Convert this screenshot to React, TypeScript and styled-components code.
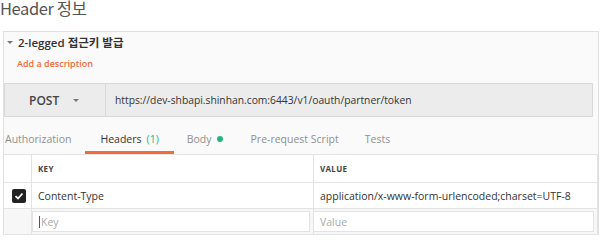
import styled, { createGlobalStyle } from 'styled-components';

const GlobalStyle = createGlobalStyle`
  body {
    margin: 0;
    background: #fff;
    font-family: "Open Sans", "Noto Sans CJK KR", sans-serif;
  }
`;

const Page = styled.div`
  width: 600px;
  height: 241px;
  overflow: hidden;
`;

const Title = styled.h2`
  margin: 0;
  height: 31px;
  font-family: "Noto Sans CJK KR", sans-serif;
  font-size: 16.5px;
  font-weight: 400;
  line-height: 17px;
  color: #555;
  letter-spacing: -0.4px;
`;

const Panel = styled.div`
  margin-left: 3px;
  width: 594px;
  background: #fafafa;
  border: 1px solid #e0e0e0;
  border-bottom: none;
`;

const NameRow = styled.div`
  display: flex;
  align-items: center;
  gap: 5px;
  height: 20px;
  padding: 0 0 0 3px;
  font-family: "Open Sans", "Noto Sans CJK KR", sans-serif;
  font-size: 11.5px;
  font-weight: 600;
  color: #333;
`;

const Caret = styled.span<{ $size: number }>`
  width: 0;
  height: 0;
  border-left: ${(p) => p.$size}px solid transparent;
  border-right: ${(p) => p.$size}px solid transparent;
  border-top: ${(p) => p.$size}px solid #777;
`;

const Description = styled.div`
  height: 22px;
  margin-bottom: 9px;
  padding-left: 13px;
  display: flex;
  align-items: center;
  font-size: 9px;
  font-weight: 600;
  color: #f26b3a;
`;

const UrlBar = styled.div`
  display: flex;
  height: 34px;
  width: 589px;
  border: 1px solid #d9d9d9;
  background: #ececec;
  box-sizing: border-box;
`;

const MethodBox = styled.div`
  width: 101px;
  display: flex;
  align-items: center;
  gap: 14px;
  padding-left: 24px;
  box-sizing: border-box;
  border-right: 1px solid #d9d9d9;
  font-size: 12px;
  font-weight: 600;
  color: #444;
`;

const UrlText = styled.div`
  display: flex;
  align-items: center;
  padding-left: 9px;
  font-size: 10.3px;
  color: #333;
`;

const Tabs = styled.div`
  display: flex;
  height: 36px;
  margin-top: 1px;
  align-items: stretch;
`;

const Tab = styled.div<{ $active?: boolean; $gap: number }>`
  display: flex;
  align-items: center;
  gap: 5px;
  padding: 8px ${(p) => (p.$active ? 15 : 0)}px 0;
  margin-right: ${(p) => p.$gap}px;
  font-size: 10.5px;
  color: ${(p) => (p.$active ? '#333' : '#909090')};
  border-bottom: 3px solid ${(p) => (p.$active ? '#f26b3a' : 'transparent')};
  box-sizing: border-box;
  &:first-child {
    padding-left: 1px;
  }
`;

const Count = styled.span`
  color: #26b47f;
`;

const Dot = styled.span`
  width: 6px;
  height: 6px;
  border-radius: 50%;
  background: #26b47f;
`;

const Table = styled.div`
  display: grid;
  grid-template-columns: 28px 282px 284px;
  background: #fff;
  border-top: 1px solid #e3e3e3;
`;

const Cell = styled.div<{ $h: number; $last?: boolean }>`
  height: ${(p) => p.$h}px;
  display: flex;
  align-items: center;
  padding-left: 6px;
  box-sizing: border-box;
  border-right: 1px solid #e3e3e3;
  border-bottom: 1px solid #e3e3e3;
  font-size: 10.5px;
  color: #333;
  background: ${(p) => (p.$last ? '#f7f7f7' : '#fff')};
`;

const HeadCell = styled(Cell)`
  font-size: 8px;
  font-weight: 700;
  letter-spacing: 0.3px;
  color: #444;
`;

const CheckCell = styled(Cell)`
  padding-left: 8px;
`;

const Check = styled.span`
  width: 14px;
  height: 14px;
  border-radius: 2px;
  background: #222;
  display: flex;
  align-items: center;
  justify-content: center;
`;

const InputCell = styled(Cell)`
  padding: 2px 3px 2px 0;
`;

const FakeInput = styled.div<{ $cursor?: boolean }>`
  flex: 1;
  height: 100%;
  background: #fff;
  border: 1px solid #e3e3e3;
  box-sizing: border-box;
  display: flex;
  align-items: center;
  padding-left: 6px;
  color: #aaa;
  font-size: 10.5px;
  border-left: ${(p) => (p.$cursor ? '1px solid #e3e3e3' : 'none')};
`;

const Cursor = styled.span`
  width: 1px;
  height: 12px;
  background: #555;
  margin-right: 1px;
`;

export default function App() {
  return (
    <Page>
      <GlobalStyle />
      <Title>Header 정보</Title>
      <Panel>
        <NameRow>
          <Caret $size={3} />
          2-legged 접근키 발급
        </NameRow>
        <Description>Add a description</Description>
        <UrlBar>
          <MethodBox>
            POST
            <Caret $size={3} />
          </MethodBox>
          <UrlText>https://dev-shbapi.shinhan.com:6443/v1/oauth/partner/token</UrlText>
        </UrlBar>
        <Tabs>
          <Tab $gap={14}>Authorization</Tab>
          <Tab $active $gap={13}>
            Headers <Count>(1)</Count>
          </Tab>
          <Tab $gap={28}>
            Body <Dot />
          </Tab>
          <Tab $gap={26}>Pre-request Script</Tab>
          <Tab $gap={0}>Tests</Tab>
        </Tabs>
        <Table>
          <Cell $h={28} />
          <HeadCell $h={28}>KEY</HeadCell>
          <HeadCell $h={28}>VALUE</HeadCell>
          <CheckCell $h={26}>
            <Check>
              <svg width="10" height="10" viewBox="0 0 10 10">
                <path d="M1.5 5.2 L4 7.5 L8.5 2.5" fill="none" stroke="#fff" strokeWidth="1.8" />
              </svg>
            </Check>
          </CheckCell>
          <Cell $h={26}>Content-Type</Cell>
          <Cell $h={26}>application/x-www-form-urlencoded;charset=UTF-8</Cell>
          <Cell $h={26} $last />
          <InputCell $h={26} $last>
            <FakeInput $cursor>
              <Cursor />
              Key
            </FakeInput>
          </InputCell>
          <InputCell $h={26} $last>
            <FakeInput>Value</FakeInput>
          </InputCell>
        </Table>
      </Panel>
    </Page>
  );
}
